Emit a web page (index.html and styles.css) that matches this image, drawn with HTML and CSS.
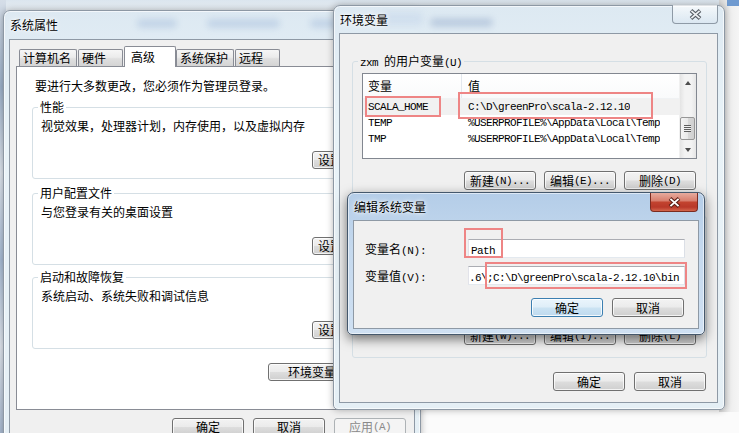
FILE: index.html
```html
<!DOCTYPE html>
<html lang="zh-CN">
<head>
<meta charset="utf-8">
<title>环境变量</title>
<link rel="stylesheet" href="styles.css">
</head>
<body>
<div class="desk">
  <div class="bg-top"></div>
  <div class="bg-left"></div>
  <div class="bg-right"></div>
  <div class="bg-corner"></div>

  <section class="win sys">
    <header class="tbar">
      <span class="blob sb1"></span><span class="blob sb2"></span><span class="blob sb3"></span>
      <span class="ttl">系统属性</span>
    </header>
    <div class="client">
      <div class="tabs">
        <div class="tab w4">计算机名</div>
        <div class="tab">硬件</div>
        <div class="tab sel">高级</div>
        <div class="tab w4">系统保护</div>
        <div class="tab">远程</div>
      </div>
      <div class="panel">
        <p class="note">要进行大多数更改，您必须作为管理员登录。</p>
        <fieldset class="grp">
          <legend>性能</legend>
          <div class="gtext">视觉效果，处理器计划，内存使用，以及虚拟内存</div>
          <div class="gact"><button class="btn">设置<span class="m">(S)...</span></button></div>
        </fieldset>
        <fieldset class="grp">
          <legend>用户配置文件</legend>
          <div class="gtext">与您登录有关的桌面设置</div>
          <div class="gact"><button class="btn">设置<span class="m">(E)...</span></button></div>
        </fieldset>
        <fieldset class="grp g3">
          <legend>启动和故障恢复</legend>
          <div class="gtext">系统启动、系统失败和调试信息</div>
          <div class="gact"><button class="btn">设置<span class="m">(T)...</span></button></div>
        </fieldset>
        <div class="envrow"><button class="btn envbtn">环境变量<span class="m">(N)...</span></button></div>
      </div>
      <div class="dlgbtns">
        <button class="btn">确定</button>
        <button class="btn">取消</button>
        <button class="btn dis">应用<span class="m">(A)</span></button>
      </div>
    </div>
  </section>

  <section class="win env">
    <header class="tbar">
      <span class="blob eb1"></span><span class="blob eb2"></span>
      <span class="ttl">环境变量</span>
      <span class="close">
        <svg width="13" height="11" viewBox="0 0 13 11"><path d="M2 1.5L11 9.5M11 1.5L2 9.5" stroke="#555b62" stroke-width="3.8"/><path d="M2.4 1.9L10.6 9.1M10.6 1.9L2.4 9.1" stroke="#eef0f2" stroke-width="1.8"/></svg>
      </span>
    </header>
    <div class="client">
      <fieldset class="egrp">
        <legend><span class="m">zxm </span>的用户变量<span class="m">(U)</span></legend>
        <div class="lv">
          <div class="lv-main">
            <div class="lv-head"><div class="h1">变量</div><div class="h2">值</div></div>
            <div class="row selrow"><div class="c1 m">SCALA_HOME</div><div class="c2 m">C:\D\greenPro\scala-2.12.10</div></div>
            <div class="row"><div class="c1 m">TEMP</div><div class="c2 m">%USERPROFILE%\AppData\Local\Temp</div></div>
            <div class="row"><div class="c1 m">TMP</div><div class="c2 m">%USERPROFILE%\AppData\Local\Temp</div></div>
          </div>
          <div class="sb">
            <div class="sbb"><span class="arr up"></span></div>
            <div class="track"><div class="thumb"><span class="grip"></span></div></div>
            <div class="sbb"><span class="arr dn"></span></div>
          </div>
        </div>
        <div class="ebtns">
          <button class="btn">新建<span class="m">(N)...</span></button>
          <button class="btn">编辑<span class="m">(E)...</span></button>
          <button class="btn">删除<span class="m">(D)</span></button>
        </div>
      </fieldset>
      <fieldset class="egrp egrp2">
        <legend>系统变量<span class="m">(S)</span></legend>
        <div class="lv">
          <div class="lv-main">
            <div class="lv-head"><div class="h1">变量</div><div class="h2">值</div></div>
            <div class="row"><div class="c1 m">ComSpec</div><div class="c2 m">C:\Windows\system32\cmd.exe</div></div>
            <div class="row"><div class="c1 m">FP_NO_HOST_C...</div><div class="c2 m">NO</div></div>
            <div class="row"><div class="c1 m">JAVA_HOME</div><div class="c2 m">C:\D\Java\jdk1.8.0_161</div></div>
          </div>
          <div class="sb">
            <div class="sbb"><span class="arr up"></span></div>
            <div class="track"><div class="thumb"><span class="grip"></span></div></div>
            <div class="sbb"><span class="arr dn"></span></div>
          </div>
        </div>
        <div class="ebtns">
          <button class="btn">新建<span class="m">(W)...</span></button>
          <button class="btn">编辑<span class="m">(I)...</span></button>
          <button class="btn">删除<span class="m">(L)</span></button>
        </div>
      </fieldset>
      <div class="ebot">
        <button class="btn">确定</button>
        <button class="btn">取消</button>
      </div>
    </div>
  </section>

  <section class="win edit">
    <header class="tbar">
      <span class="ttl">编辑系统变量</span>
      <span class="close red">
        <svg width="13" height="11" viewBox="0 0 13 11"><path d="M2 1.5L11 9.5M11 1.5L2 9.5" stroke="#5a1d14" stroke-width="3.8"/><path d="M2.4 1.9L10.6 9.1M10.6 1.9L2.4 9.1" stroke="#ffffff" stroke-width="1.9"/></svg>
      </span>
    </header>
    <div class="client">
      <div class="frow">
        <div class="flabel">变量名<span class="m ul">(N):</span></div>
        <div class="inp"><span class="m">Path</span></div>
      </div>
      <div class="frow">
        <div class="flabel">变量值<span class="m ul">(V):</span></div>
        <div class="inp inp2"><span class="m">.6\;C:\D\greenPro\scala-2.12.10\bin</span></div>
      </div>
      <div class="fbtns">
        <button class="btn def">确定</button>
        <button class="btn">取消</button>
      </div>
    </div>
  </section>

  <div class="mark r1"></div>
  <div class="mark r2"></div>
  <div class="mark r3"></div>
  <div class="mark r4"></div>
</div>
</body>
</html>
```

FILE: styles.css
```css
* { box-sizing: border-box; }
html, body { margin: 0; padding: 0; }
body {
  width: 739px;
  height: 433px;
  overflow: hidden;
  font-family: "Noto Sans CJK SC", "Noto Sans", sans-serif;
  font-size: 12px;
  line-height: 14px;
  color: #000;
}
.desk {
  position: relative;
  width: 739px;
  height: 433px;
  overflow: hidden;
  background: #fbfbfb;
}
.bg-top {
  position: absolute; left: 0; top: 0; width: 739px; height: 14px;
  background: linear-gradient(#dbe5ee, #eef3f7);
}
.bg-left {
  position: absolute; left: 0; top: 0; width: 6px; height: 433px;
  background: linear-gradient(180deg, #d5dee8 0%, #9fb3cc 20%, #dfe6ee 40%, #a9bdd6 60%, #e0e6ee 80%, #aabbd2 100%);
}
.bg-right {
  position: absolute; right: 0; top: 0; width: 20px; height: 412px;
  background: linear-gradient(90deg, #d6d6d6, #efefef 60%, #f5f5f5);
}
.bg-corner {
  position: absolute; right: 0; top: 0; width: 12px; height: 6px;
  background: #6f9ad0;
}

.m {
  font-family: "Liberation Mono", monospace;
  font-size: 11px;
  line-height: 10px;
  letter-spacing: -0.6px;
}
.m.ul { letter-spacing: -0.3px; }

/* windows */
.win {
  position: absolute;
  display: flex;
  flex-direction: column;
  border: 1px solid #8d98a4;
  border-radius: 7px 7px 5px 5px;
  background: linear-gradient(180deg, #dde9f2 0%, #e9f3f8 30%, #e5eff5 100%);
  box-shadow: inset 0 0 0 1px rgba(255,255,255,.65), 0 0 7px rgba(0,0,0,.3);
}
.sys { left: 3px; top: 10px; width: 418px; height: 440px; z-index: 1; }
.env { left: 333px; top: 5px; width: 392px; height: 405px; z-index: 2; }
.edit {
  left: 347px; top: 192px; width: 358px; height: 143px; z-index: 3;
  border-color: #45586c;
  background: linear-gradient(180deg, #b4cde8 0%, #c5d9ee 40%, #cfe0f2 100%);
  box-shadow: inset 0 0 0 1px rgba(255,255,255,.55), 0 4px 12px rgba(0,0,0,.55);
}

.tbar {
  position: relative;
  display: flex;
  align-items: flex-start;
  flex: none;
  height: 27px;
}
.sys .tbar { height: 28px; }
.ttl {
  position: relative;
  padding: 7px 0 0 6px;
  text-shadow: 0 0 6px #fff, 0 0 3px #fff;
}
.blob {
  position: absolute;
  height: 9px;
  border-radius: 5px;
  background: rgba(90, 130, 190, .2);
  filter: blur(3px);
}
.sb1 { left: 133px; top: 8px; width: 40px; }
.sb2 { left: 203px; top: 8px; width: 73px; }
.sb3 { left: 306px; top: 8px; width: 30px; }
.eb1 { left: 46px; top: 6px; width: 43px; height: 14px; background: rgba(120, 160, 210, .12); }
.eb2 { left: 96px; top: 12px; width: 63px; background: rgba(70, 100, 160, .22); }

.close {
  margin-left: auto;
  margin-right: 6px;
  margin-top: -1px;
  width: 46px;
  height: 19px;
  border: 1px solid #8e9aa6;
  border-top: 0;
  border-radius: 0 0 4px 4px;
  display: flex;
  align-items: center;
  justify-content: center;
  background: linear-gradient(rgba(255,255,255,.75), rgba(255,255,255,.3) 50%, rgba(215,228,240,.5));
}
.close.red {
  width: 48px;
  margin-top: 0;
  border-color: #7b2b20;
  background: linear-gradient(#e7ab9e 0%, #d9806f 42%, #c2432f 52%, #b93829 78%, #d3654c 100%);
}

.client {
  flex: 1;
  margin: 0 5px 5px 5px;
  border: 1px solid #8e99a5;
  background: #f0f0f0;
}
.env .client { margin: 0 6px 6px 5px; padding: 20px 10px 0 12px; }
.sys .client { padding: 6px 6px 0 6px; }
.edit .client { padding: 18px 13px 0 11px; }

/* tabs */
.tabs {
  position: relative;
  z-index: 1;
  display: flex;
  align-items: flex-end;
  height: 20px;
  padding-left: 3px;
}
.tab {
  height: 17px;
  width: 45px;
  margin-right: 1px;
  padding: 0 0 0 3px;
  border: 1px solid #898c95;
  border-bottom: 0;
  border-radius: 2px 2px 0 0;
  background: linear-gradient(#f6f6f6 0%, #ececec 45%, #dfdfdf 55%, #d4d4d4 100%);
  line-height: 16px;
  white-space: nowrap;
}
.tab.w4 { width: 58px; }
.tab.sel {
  height: 21px;
  width: 52px;
  margin-right: 0;
  margin-bottom: -1px;
  padding: 2px 0 0 6px;
  background: #fff;
}
.panel {
  height: 344px;
  border: 1px solid #898c95;
  background: #fff;
  padding: 12px 15px 0 15px;
}
.note { margin: 0 0 0 3px; }

.grp {
  margin: 7px 0 0 0;
  padding: 5px 7px 9px 8px;
  min-width: 0;
  border: 1px solid #d5dfe5;
  border-radius: 3px;
}
.grp.g3 { margin-top: 5px; }
.grp legend, .egrp legend {
  padding: 0 2px;
  margin-left: -3px;
  line-height: 14px;
}
.gact {
  display: flex;
  justify-content: flex-end;
  margin-top: 18px;
}
.envrow {
  display: flex;
  justify-content: flex-end;
  margin-top: 14px;
}
.dlgbtns {
  display: flex;
  justify-content: flex-end;
  gap: 9px;
  margin-top: 8px;
  padding-right: 2px;
}

/* buttons */
.btn {
  display: flex;
  align-items: center;
  justify-content: center;
  width: 72px;
  height: 19px;
  padding: 0;
  border: 1px solid #707070;
  border-radius: 3px;
  background: linear-gradient(#f3f3f3 0%, #ebebeb 48%, #dddddd 52%, #cfcfcf 100%);
  box-shadow: inset 0 0 0 1px rgba(255,255,255,.75);
  font: inherit;
  line-height: 14px;
  color: #000;
  white-space: nowrap;
}
.sys .btn { height: 18px; }
.btn.envbtn { width: 124px; }
.btn.dis {
  border-color: #adb2b5;
  background: #f4f4f4;
  color: #8a8a8a;
  box-shadow: none;
}
.btn.def {
  border-color: #3c7fb1;
  background: linear-gradient(#eaf5fc 0%, #dfeef8 48%, #cbe3f3 52%, #bed9ee 100%);
  box-shadow: inset 0 0 0 1px rgba(255,255,255,.8);
}

/* env dialog */
.egrp {
  margin: 0;
  padding: 5px 9px 12px 9px;
  min-width: 0;
  border: 1px solid #d5dfe5;
  border-radius: 3px;
}
.egrp legend { margin-left: -4px; }
.egrp2 { margin-top: 6px; }
.lv {
  display: flex;
  height: 86px;
  border: 1px solid #828790;
  background: #fff;
  overflow: hidden;
}
.lv-main { flex: 1; min-width: 0; }
.lv-head {
  display: flex;
  height: 25px;
  background: linear-gradient(#ffffff, #f9fafb);
  border-bottom: 1px solid #f0f2f4;
}
.h1 {
  width: 99px;
  padding-left: 5px;
  line-height: 24px;
  border-right: 1px solid #e3e8ee;
}
.h2 { padding-left: 6px; line-height: 24px; }
.row {
  display: flex;
  height: 16px;
  line-height: 16px;
  white-space: nowrap;
}
.row .c1 { width: 99px; flex: none; padding-left: 5px; overflow: hidden; line-height: 16px; }
.row .c2 { padding-left: 6px; overflow: hidden; line-height: 16px; }
.row.selrow { background: #f1f1f1; }

.sb {
  width: 17px;
  flex: none;
  display: flex;
  flex-direction: column;
  background: linear-gradient(90deg, #e4e4e4, #f3f3f3 30%, #f3f3f3 70%, #e6e6e6);
  border-left: 1px solid #f0f0f0;
}
.sbb {
  height: 17px;
  flex: none;
  display: flex;
  align-items: center;
  justify-content: center;
}
.arr {
  width: 1px;
  height: 0;
  border-left: 3px solid transparent;
  border-right: 3px solid transparent;
}
.arr.up { border-bottom: 4px solid #4d4d4d; }
.arr.dn { border-top: 4px solid #4d4d4d; }
.track {
  flex: 1;
  display: flex;
  flex-direction: column;
  justify-content: flex-end;
  padding-bottom: 1px;
}
.thumb {
  height: 23px;
  margin: 0 1px 0 0;
  border: 1px solid #979797;
  border-radius: 2px;
  background: linear-gradient(90deg, #f4f4f4, #e9e9e9 50%, #d9d9d9 51%, #d0d0d0);
  display: flex;
  align-items: center;
  justify-content: center;
}
.grip {
  width: 7px;
  height: 7px;
  background: repeating-linear-gradient(#5e5e5e 0 1px, #f0f0f0 1px 2px);
}
.ebtns {
  display: flex;
  justify-content: flex-end;
  gap: 8px;
  margin-top: 12px;
  padding-right: 1px;
}
.ebot {
  display: flex;
  justify-content: flex-end;
  gap: 9px;
  margin-top: 14px;
  padding-right: 1px;
}

/* edit dialog */
.frow {
  display: flex;
  align-items: center;
  height: 19px;
}
.frow + .frow { margin-top: 8px; }
.flabel { width: 103px; flex: none; white-space: nowrap; }
.inp {
  flex: 1;
  height: 19px;
  border: 1px solid #abadb3;
  border-left-color: #e2e3ea;
  border-right-color: #dbdfe6;
  border-bottom-color: #e3e9ef;
  background: #fff;
  padding-left: 2px;
  line-height: 17px;
  overflow: hidden;
  white-space: nowrap;
}
.inp2 { padding-left: 0; }
.fbtns {
  display: flex;
  justify-content: flex-end;
  gap: 9px;
  margin-top: 13px;
  padding-right: 1px;
}

/* red annotation boxes */
.mark {
  position: absolute;
  z-index: 5;
  border: 2px solid #ee8585;
}
.r1 { left: 365px; top: 96px; width: 76px; height: 21px; }
.r2 { left: 458px; top: 92px; width: 195px; height: 27px; }
.r3 { left: 464px; top: 228px; width: 39px; height: 30px; }
.r4 { left: 485px; top: 262px; width: 202px; height: 27px; }
```
